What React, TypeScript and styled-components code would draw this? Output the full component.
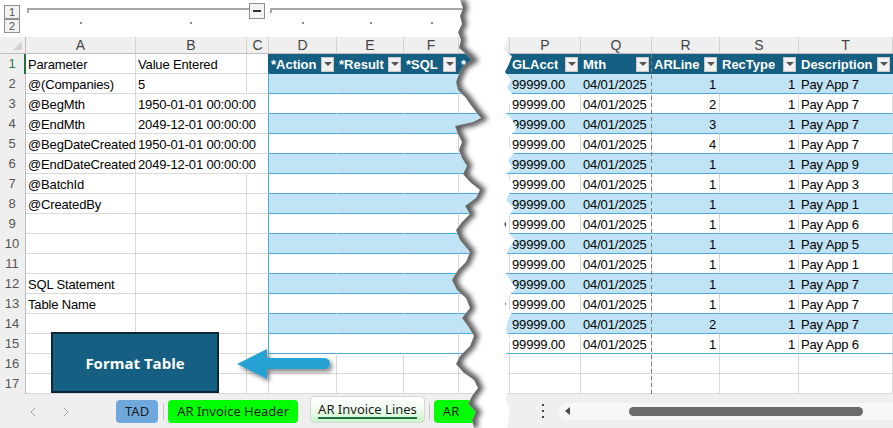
import React from "react";
import styled, { createGlobalStyle } from "styled-components";
import { ChevronLeft, ChevronRight } from "lucide-react";

const DARK = "#156082";
const BAND = "#c0e4f5";
const LINE = "#4ea8da";
const GRID = "#d9d9d9";
const HEAD_BG = "#efefef";

const GlobalStyle = createGlobalStyle`
  html, body { margin: 0; padding: 0; background: #fff; }
  body { font-family: "Liberation Sans", Arial, sans-serif; overflow: hidden; }
  * { box-sizing: border-box; }
`;

const Page = styled.div`
  position: relative;
  width: 893px;
  height: 428px;
  overflow: hidden;
  display: flex;
  background: #fff;
`;

const Pane = styled.div<{ $w: number }>`
  position: relative;
  flex: none;
  width: ${(p) => p.$w}px;
  display: flex;
  flex-direction: column;
  overflow: hidden;
`;

const Gap = styled.div`
  flex: none;
  width: 20px;
  background: #fff;
`;

/* ---------- outline bar ---------- */
const OutlineBar = styled.div`
  height: 37px;
  flex: none;
  display: flex;
  background: #fff;
`;

const LevelStack = styled.div`
  width: 26px;
  flex: none;
  display: flex;
  flex-direction: column;
  padding: 5px 0 0 4px;
`;

const LevelButton = styled.div`
  width: 16px;
  height: 14px;
  border: 1px solid #8f8f8f;
  background: #f2f2f2;
  color: #555;
  font-size: 11px;
  line-height: 12px;
  text-align: center;
`;

/* ---------- grid ---------- */
const SheetRow = styled.div<{ $cols: string; $h: number }>`
  display: grid;
  grid-template-columns: ${(p) => p.$cols};
  height: ${(p) => p.$h}px;
  flex: none;
`;

const Corner = styled.div`
  position: relative;
  background: ${HEAD_BG};
  border-right: 1px solid #bdbdbd;
  border-bottom: 1px solid #bdbdbd;
  &::after {
    content: "";
    position: absolute;
    right: 3px;
    bottom: 3px;
    border-left: 9px solid transparent;
    border-bottom: 9px solid #d2d2d2;
  }
`;

const ColHead = styled.div`
  background: ${HEAD_BG};
  border-right: 1px solid #d2d2d2;
  border-bottom: 1px solid #bdbdbd;
  color: #444;
  font-size: 14px;
  line-height: 16px;
  text-align: center;
  overflow: hidden;
`;

const RowHead = styled.div<{ $active?: boolean }>`
  background: ${HEAD_BG};
  border-right: ${(p) => (p.$active ? "2px solid #1f7145" : "1px solid #bdbdbd")};
  border-bottom: 1px solid #d2d2d2;
  color: ${(p) => (p.$active ? "#2d7a52" : "#555")};
  font-size: 13px;
  line-height: 20px;
  text-align: center;
  padding-right: ${(p) => (p.$active ? "0" : "1px")};
`;

type Kind = "plain" | "th" | "band" | "tw";

const bgOf = (k: Kind) => (k === "th" ? DARK : k === "band" ? BAND : "#fff");
const bottomOf = (k: Kind) => (k === "th" ? DARK : k === "plain" ? GRID : LINE);
const rightOf = (k: Kind) => (k === "th" ? DARK : k === "band" ? BAND : GRID);

const Cell = styled.div<{
  $kind: Kind;
  $right?: string;
  $align?: "left" | "right";
  $spill?: boolean;
}>`
  position: relative;
  z-index: ${(p) => (p.$spill ? 1 : 0)};
  height: 20px;
  display: flex;
  align-items: center;
  justify-content: ${(p) =>
    p.$kind === "th" ? "space-between" : p.$align === "right" ? "flex-end" : "flex-start"};
  padding: 1px ${(p) => (p.$kind === "th" ? "2px" : "3px")} 0 2px;
  overflow: ${(p) => (p.$spill ? "visible" : "hidden")};
  white-space: nowrap;
  font-size: 13px;
  letter-spacing: -0.15px;
  color: ${(p) => (p.$kind === "th" ? "#fff" : "#000")};
  font-weight: ${(p) => (p.$kind === "th" ? 700 : 400)};
  background: ${(p) => bgOf(p.$kind)};
  border-bottom: 1px solid ${(p) => bottomOf(p.$kind)};
  border-right: 1px solid ${(p) => p.$right ?? rightOf(p.$kind)};
`;

const HeadLabel = styled.span`
  overflow: hidden;
  letter-spacing: 0;
`;

const DropButton = styled.span`
  flex: none;
  width: 13px;
  height: 15px;
  margin-left: 2px;
  background: #f1f1f1;
  border: 1px solid #c9c9c9;
  display: flex;
  align-items: center;
  justify-content: center;
  &::after {
    content: "";
    border-left: 4px solid transparent;
    border-right: 4px solid transparent;
    border-top: 4px solid #555;
  }
`;

/* ---------- bottom bars ---------- */
const TabBar = styled.div`
  flex: none;
  height: 34px;
  background: #efefef;
  display: flex;
  align-items: flex-end;
  padding: 0 0 5px 16px;
`;

const NavButton = styled.div`
  flex: none;
  width: 33px;
  height: 23px;
  display: flex;
  align-items: center;
  justify-content: center;
  color: #9c9c9c;
`;

const Tab = styled.div<{ $bg: string; $ml?: number; $minW?: number }>`
  flex: none;
  height: 23px;
  min-width: ${(p) => p.$minW ?? 0}px;
  margin-left: ${(p) => p.$ml ?? 0}px;
  padding: 0 9px;
  border-radius: 4px;
  background: ${(p) => p.$bg};
  color: #1b1b1b;
  font-family: "Noto Sans", "Open Sans", sans-serif;
  font-size: 13px;
  line-height: 23px;
  white-space: nowrap;
`;

const ActiveTab = styled.div<{ $ml?: number }>`
  flex: none;
  position: relative;
  height: 27px;
  margin-left: ${(p) => p.$ml ?? 0}px;
  padding: 0 7px;
  border: 1px solid #d6d6d6;
  border-radius: 4px;
  background: linear-gradient(#ffffff 0%, #f2fdf2 45%, #c9f5c9 100%);
  color: #1b1b1b;
  font-family: "Noto Sans", "Open Sans", sans-serif;
  font-size: 13px;
  line-height: 24px;
  white-space: nowrap;
  &::after {
    content: "";
    position: absolute;
    left: 7px;
    right: 7px;
    bottom: 3px;
    height: 2px;
    background: #1f7145;
  }
`;

const TabDivider = styled.div<{ $ml: number }>`
  flex: none;
  width: 1px;
  height: 17px;
  margin: 0 0 3px ${(p) => p.$ml}px;
  background: #c6c6c6;
`;

const ScrollBar = styled.div`
  flex: none;
  height: 34px;
  background: #efefef;
  display: flex;
  align-items: center;
  padding-left: 41px;
`;

const Kebab = styled.div`
  flex: none;
  width: 4px;
  height: 14px;
  display: flex;
  flex-direction: column;
  justify-content: space-between;
  align-items: center;
  span {
    width: 2px;
    height: 2px;
    background: #444;
  }
`;

const Track = styled.div`
  flex: 1;
  height: 17px;
  margin-left: 14px;
  background: #f7f7f7;
  border-radius: 8px 0 0 8px;
  display: flex;
  align-items: center;
  padding-left: 6px;
`;

const LeftTriangle = styled.span`
  flex: none;
  border-top: 4px solid transparent;
  border-bottom: 4px solid transparent;
  border-right: 5px solid #4a4a4a;
`;

const Thumb = styled.div`
  flex: none;
  width: 234px;
  height: 9px;
  margin-left: 59px;
  border-radius: 5px;
  background: #6b6b6b;
`;

const PageBreak = styled.div`
  position: absolute;
  left: 151px;
  top: 54px;
  width: 1px;
  height: 340px;
  background: repeating-linear-gradient(#7d7d7d 0 4px, transparent 4px 7px);
  z-index: 2;
`;

/* ---------- button + arrow overlays ---------- */
const FormatButton = styled.div`
  position: absolute;
  left: 51px;
  top: 332px;
  width: 168px;
  height: 61px;
  background: ${DARK};
  border: 2px solid #0b2738;
  color: #fff;
  font-family: "Open Sans", "Noto Sans", sans-serif;
  font-weight: 700;
  font-size: 15px;
  display: flex;
  align-items: center;
  justify-content: center;
  z-index: 3;
`;

const ArrowWrap = styled.svg`
  position: absolute;
  left: 230px;
  top: 342px;
  z-index: 3;
`;

const TearWrap = styled.svg`
  position: absolute;
  left: 430px;
  top: 0;
  z-index: 5;
`;

/* ---------- data ---------- */
const LEFT_COLS = [26, 110, 111, 22, 68, 67, 55, 21];
const RIGHT_COLS = [10, 71, 71, 68, 79, 94];
const tmpl = (c: number[]) => c.map((w) => `${w}px`).join(" ");

const params: [string, string][] = [
  ["Parameter", "Value Entered"],
  ["@(Companies)", "5"],
  ["@BegMth", "1950-01-01 00:00:00"],
  ["@EndMth", "2049-12-01 00:00:00"],
  ["@BegDateCreated", "1950-01-01 00:00:00"],
  ["@EndDateCreated", "2049-12-01 00:00:00"],
  ["@BatchId", ""],
  ["@CreatedBy", ""],
  ["", ""],
  ["", ""],
  ["", ""],
  ["SQL Statement", ""],
  ["Table Name", ""],
  ["", ""],
  ["", ""],
  ["", ""],
  ["", ""],
];

const arLine = [1, 2, 3, 4, 1, 1, 1, 1, 1, 1, 1, 1, 2, 1];
const desc = [7, 7, 7, 7, 9, 3, 1, 6, 5, 1, 7, 7, 7, 6];

const leftEdge: [number, number][] = [
  [460, 0], [463, 8], [460, 16], [462, 24], [458, 32], [461, 40], [459, 48], [466, 54], [472, 60],
  [463, 66], [459, 74], [456, 82], [458, 90], [466, 98], [470, 104], [476, 112], [481, 118],
  [473, 122], [455, 126], [458, 134], [462, 142], [459, 150], [462, 158], [467, 166], [463, 174],
  [470, 182], [480, 190], [476, 198], [465, 206], [470, 214], [462, 222], [456, 230], [460, 240],
  [470, 252], [466, 262], [458, 270], [452, 280], [457, 290], [466, 298], [470, 308], [462, 318],
  [468, 326], [474, 336], [470, 346], [460, 356], [456, 364], [463, 372], [474, 380], [478, 388],
  [472, 396], [468, 404], [476, 412], [472, 420], [474, 428],
];
const rightEdge: [number, number][] = [
  [506, 0], [505, 20], [507, 40], [503, 50], [512, 56], [509, 64], [505, 72], [511, 80], [507, 88],
  [514, 96], [509, 104], [505, 112], [512, 120], [517, 128], [510, 136], [506, 144], [515, 152],
  [508, 160], [512, 168], [504, 176], [514, 184], [510, 192], [506, 200], [514, 208], [509, 216],
  [504, 224], [508, 232], [515, 240], [509, 248], [506, 256], [510, 264], [505, 272], [510, 280],
  [516, 288], [509, 296], [505, 304], [512, 312], [508, 320], [506, 330], [510, 340], [507, 350],
  [505, 360], [508, 380], [506, 400], [510, 410], [507, 428],
];

const OX = 430;
const pts = (a: [number, number][], dx = 0) => a.map(([x, y]) => `${x - OX + dx},${y}`).join(" ");

function Tear() {
  const poly = `${pts(leftEdge)} ${pts([...rightEdge].reverse())}`;
  return (
    <TearWrap width={100} height={428} viewBox="0 0 100 428">
      <defs>
        <clipPath id="gapClip">
          <polygon points={poly} />
        </clipPath>
        <filter id="tearBlur" x="-50%" y="-5%" width="200%" height="110%">
          <feGaussianBlur stdDeviation="2.4" />
        </filter>
      </defs>
      <polygon points={poly} fill="#fff" />
      <g clipPath="url(#gapClip)">
        <polyline points={pts(leftEdge, 1)} fill="none" stroke="#4a4a4a" strokeWidth={8} filter="url(#tearBlur)" opacity={0.9} />
      </g>
    </TearWrap>
  );
}

function Arrow() {
  return (
    <ArrowWrap width={110} height={46} viewBox="0 0 110 46">
      <defs>
        <filter id="arrowShadow" x="-20%" y="-30%" width="140%" height="170%">
          <feDropShadow dx="2.5" dy="3" stdDeviation="2" floodColor="#000" floodOpacity="0.45" />
        </filter>
      </defs>
      <path
        d="M7 22 L37 7 L37 16 L94.5 16 A5.5 5.5 0 0 1 94.5 27 L37 27 L37 37 Z"
        fill="#27a1d3"
        filter="url(#arrowShadow)"
      />
    </ArrowWrap>
  );
}

function OutlineGraphic() {
  const dots = [54, 164, 276, 344, 405];
  return (
    <svg width={454} height={37} viewBox="0 0 454 37">
      <path d="M2 13 V9 H223" fill="none" stroke="#a6a6a6" strokeWidth={2} />
      <path d="M245 13 V9 H454" fill="none" stroke="#a6a6a6" strokeWidth={2} />
      <rect x={223.5} y={3.5} width={15} height={15} fill="#f4f4f4" stroke="#8f8f8f" />
      <line x1={227} y1={11} x2={235} y2={11} stroke="#333" strokeWidth={2} />
      {dots.map((x) => (
        <rect key={x} x={x} y={22} width={2} height={2} fill="#8c8c8c" />
      ))}
    </svg>
  );
}

function LeftSheet() {
  const letters = ["A", "B", "C", "D", "E", "F", "G"];
  const heads = ["*Action", "*Result", "*SQL", "*"];
  return (
    <Pane $w={480}>
      <OutlineBar>
        <LevelStack>
          <LevelButton>1</LevelButton>
          <LevelButton>2</LevelButton>
        </LevelStack>
        <OutlineGraphic />
      </OutlineBar>
      <SheetRow $cols={tmpl(LEFT_COLS)} $h={17}>
        <Corner />
        {letters.map((l) => (
          <ColHead key={l}>{l}</ColHead>
        ))}
      </SheetRow>
      {params.map(([a, b], i) => {
        const r = i + 1;
        const inTable = r <= 15;
        const kind: Kind = r === 1 ? "th" : !inTable ? "plain" : r % 2 === 0 ? "band" : "tw";
        const spill = b.length > 14;
        return (
          <SheetRow key={r} $cols={tmpl(LEFT_COLS)} $h={20}>
            <RowHead $active={r === 1}>{r}</RowHead>
            <Cell $kind="plain">{a}</Cell>
            <Cell $kind="plain" $spill={spill} $right={spill ? "#fff" : undefined}>{b}</Cell>
            <Cell $kind="plain" $right={inTable ? (r === 1 ? DARK : LINE) : undefined} />
            {[0, 1, 2, 3].map((c) => {
              if (kind === "th") {
                return (
                  <Cell key={c} $kind="th">
                    <HeadLabel>{heads[c]}</HeadLabel>
                    {c < 3 && <DropButton />}
                  </Cell>
                );
              }
              const right = kind === "tw" ? (c === 2 ? GRID : "#fff") : undefined;
              return <Cell key={c} $kind={kind} $right={right} />;
            })}
          </SheetRow>
        );
      })}
      <TabBar>
        <NavButton>
          <ChevronLeft size={16} strokeWidth={1.4} />
        </NavButton>
        <NavButton>
          <ChevronRight size={16} strokeWidth={1.4} />
        </NavButton>
        <Tab $bg="#6fa8dc" $ml={34}>TAD</Tab>
        <TabDivider $ml={5} />
        <Tab $bg="#00ff00" $ml={4}>AR Invoice Header</Tab>
        <ActiveTab $ml={12}>AR Invoice Lines</ActiveTab>
        <TabDivider $ml={4} />
        <Tab $bg="#00ff00" $ml={4} $minW={50}>AR</Tab>
      </TabBar>
      <FormatButton>Format Table</FormatButton>
      <Arrow />
    </Pane>
  );
}

function RightSheet() {
  const letters = ["", "P", "Q", "R", "S", "T"];
  const heads = ["", "GLAcct", "Mth", "ARLine", "RecType", "Description"];
  const rows = Array.from({ length: 17 }, (_, i) => i + 1);
  return (
    <Pane $w={393}>
      <OutlineBar />
      <SheetRow $cols={tmpl(RIGHT_COLS)} $h={17}>
        {letters.map((l, i) => (
          <ColHead key={i}>{l}</ColHead>
        ))}
      </SheetRow>
      {rows.map((r) => {
        const inTable = r <= 15;
        const kind: Kind = r === 1 ? "th" : !inTable ? "plain" : r % 2 === 0 ? "band" : "tw";
        if (kind === "th") {
          return (
            <SheetRow key={r} $cols={tmpl(RIGHT_COLS)} $h={20}>
              {heads.map((h, c) => (
                <Cell key={c} $kind="th">
                  <HeadLabel>{h}</HeadLabel>
                  {c > 0 && <DropButton />}
                </Cell>
              ))}
            </SheetRow>
          );
        }
        const d = inTable ? r - 2 : -1;
        return (
          <SheetRow key={r} $cols={tmpl(RIGHT_COLS)} $h={20}>
            <Cell $kind={kind} $align="right">{d >= 0 ? "10" : ""}</Cell>
            <Cell $kind={kind}>{d >= 0 ? "99999.00" : ""}</Cell>
            <Cell $kind={kind}>{d >= 0 ? "04/01/2025" : ""}</Cell>
            <Cell $kind={kind} $align="right">{d >= 0 ? arLine[d] : ""}</Cell>
            <Cell $kind={kind} $align="right">{d >= 0 ? 1 : ""}</Cell>
            <Cell $kind={kind}>{d >= 0 ? `Pay App ${desc[d]}` : ""}</Cell>
          </SheetRow>
        );
      })}
      <ScrollBar>
        <Kebab>
          <span />
          <span />
          <span />
        </Kebab>
        <Track>
          <LeftTriangle />
          <Thumb />
        </Track>
      </ScrollBar>
      <PageBreak />
    </Pane>
  );
}

export default function App() {
  return (
    <>
      <GlobalStyle />
      <Page>
        <LeftSheet />
        <Gap />
        <RightSheet />
        <Tear />
      </Page>
    </>
  );
}
